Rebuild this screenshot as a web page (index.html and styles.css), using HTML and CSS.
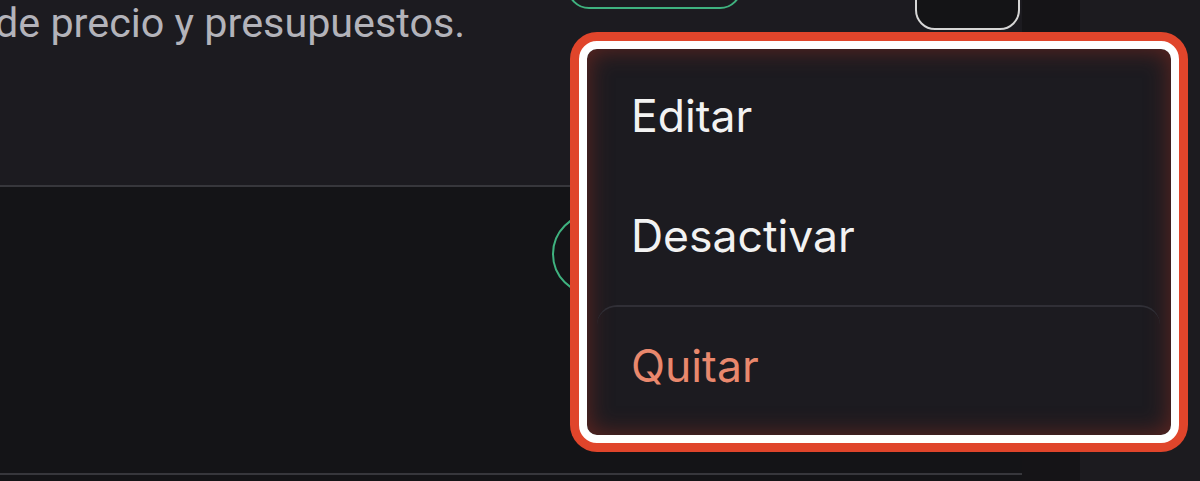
FILE: index.html
```html
<!DOCTYPE html>
<html lang="es">

<head>
    <meta charset="UTF-8">
    <meta name="viewport" content="width=device-width, initial-scale=1.0">
    <title>Tarifas</title>
    <link rel="stylesheet" href="styles.css">
</head>

<body>
    <div class="page">
        <div class="list">
            <div class="row row-active">
                <div class="row-text">
                    <p class="desc">de precio y presupuestos.</p>
                </div>
                <div class="pill pill-top"></div>
                <div class="row-actions">
                    <button class="btn-square" aria-label="Más opciones"></button>
                </div>
            </div>
            <div class="row row-next">
                <div class="row-text"></div>
                <div class="pill pill-second"></div>
            </div>
        </div>
        <div class="gutter"></div>
        <div class="sidebar"></div>
    </div>

    <div class="menu">
        <div class="menu-item">Editar</div>
        <div class="menu-item">Desactivar</div>
        <div class="menu-item menu-item-danger">Quitar</div>
    </div>
</body>

</html>
```

FILE: styles.css
```css
body {
    margin: 0;
    height: 100vh;
    overflow: hidden;
    background-color: #141417;
    font-family: "Inter", "Roboto", sans-serif;
    color: #f2f2f2;
}

.page {
    display: flex;
    height: 100%;
}

.list {
    width: 1022px;
    flex-shrink: 0;
    margin-top: -100px;
}

.row {
    display: flex;
    align-items: flex-start;
    border-bottom: 2px solid #37373c;
}

.row-active {
    height: 285px;
    background-color: #1c1b20;
}

.row-next {
    height: 286px;
    background-color: #141417;
}

.row-text {
    width: 567px;
    flex-shrink: 0;
}

.row-next .row-text {
    width: 552px;
}

.desc {
    margin: 99px 0 0 -5px;
    font-family: "Roboto", sans-serif;
    font-size: 41.3px;
    line-height: 48px;
    color: #b3b3ba;
    white-space: nowrap;
}

.pill {
    width: 171px;
    height: 78px;
    border: 2px solid #3fb27f;
    border-radius: 41px;
}

.pill-top {
    margin-top: 27px;
    border-radius: 22px;
}

.pill-second {
    margin-top: 26px;
}

.row-actions {
    flex: 1;
    display: flex;
    justify-content: flex-end;
    padding-right: 2px;
}

.btn-square {
    margin-top: 30px;
    width: 105px;
    height: 100px;
    border: 2px solid #d6d6d6;
    border-radius: 20px;
    background-color: #141416;
}

.gutter {
    width: 58px;
    background-color: #151417;
}

.sidebar {
    flex: 1;
    background-color: #1c1b1f;
}

/* dropdown, highlighted */
.menu {
    position: absolute;
    left: 579px;
    top: 41px;
    width: 563px;
    height: 369px;
    padding: 7px 11px 10px 10px;
    border: 8px solid #ffffff;
    border-radius: 18px;
    background-color: #1c1b20;
    box-shadow: 0 0 0 9px #e0452b, inset 0 0 24px rgba(125, 42, 32, 0.75);
    display: flex;
    flex-direction: column;
}

.menu-item {
    height: 120px;
    display: flex;
    align-items: center;
    padding-left: 34px;
    font-size: 44.5px;
    flex-shrink: 0;
}

.menu-item-danger {
    margin-top: 9px;
    border-top: 2px solid #302f36;
    border-radius: 20px;
    height: 118px;
    color: #e9886d;
}
```
